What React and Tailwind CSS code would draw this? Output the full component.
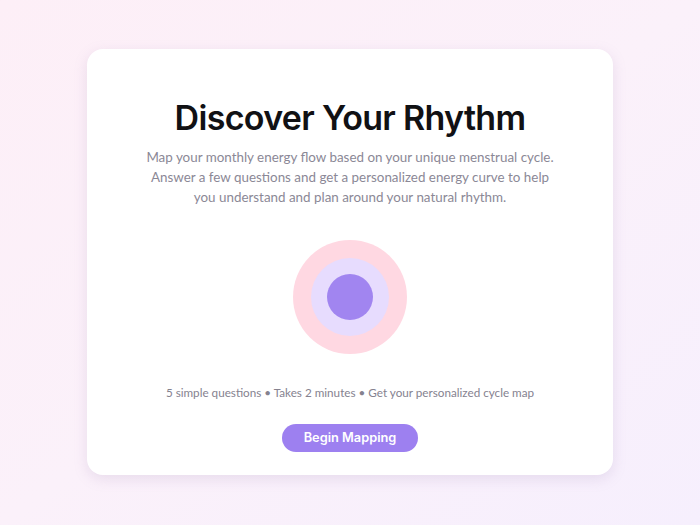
export default function App() {
  return (
    <div
      className="min-h-screen w-full flex items-center justify-center pb-[2px] bg-gradient-to-br from-[#fdeff7] via-[#fbf1fa] to-[#f6effd]"
      style={{ fontFamily: "Lato, 'Noto Sans', sans-serif" }}
    >
      <div className="w-[526px] h-[426px] bg-white rounded-[16px] shadow-[0_4px_14px_rgba(150,120,170,0.18)] flex flex-col items-center pt-[48px]">
        <h1
          className="text-[34px] leading-[41px] font-semibold text-[#111114] tracking-[-0.02em]"
          style={{ fontFamily: "Inter, sans-serif" }}
        >
          Discover Your Rhythm
        </h1>
        <p className="mt-[9px] text-center text-[13.4px] leading-[20px] text-[#8b8896] whitespace-nowrap">
          Map your monthly energy flow based on your unique menstrual cycle.
          <br />
          Answer a few questions and get a personalized energy curve to help
          <br />
          you understand and plan around your natural rhythm.
        </p>
        <div className="mt-[33px] w-[114px] h-[114px] rounded-full bg-[#ffd8e2] flex items-center justify-center">
          <div className="w-[78px] h-[78px] rounded-full bg-[#e7dcfe] flex items-center justify-center">
            <div className="w-[46px] h-[46px] rounded-full bg-[#a185f0]" />
          </div>
        </div>
        <p className="mt-[29px] text-[11.7px] leading-[18px] text-[#85828f] whitespace-nowrap">
          5 simple questions • Takes 2 minutes • Get your personalized cycle map
        </p>
        <button
          className="mt-[23px] w-[136px] h-[28px] rounded-full bg-[#9d80f0] text-white text-[12.8px] font-semibold"
          style={{ fontFamily: "Inter, sans-serif" }}
        >
          Begin Mapping
        </button>
      </div>
    </div>
  );
}
